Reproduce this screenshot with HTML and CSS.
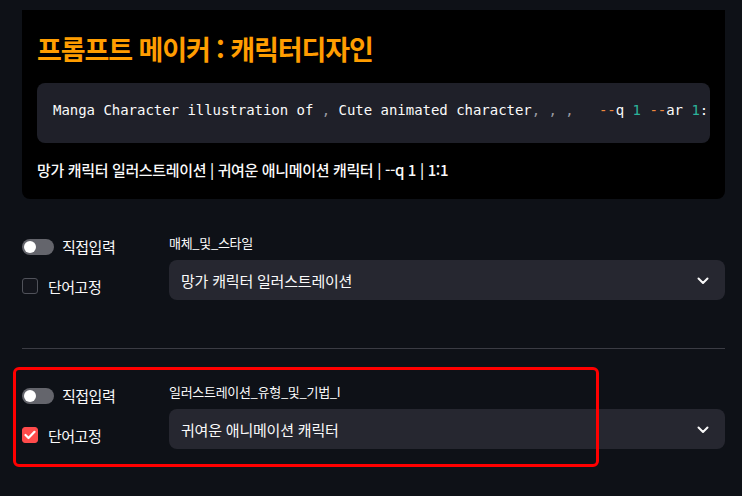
FILE: index.html
```html
<!DOCTYPE html>
<html lang="ko">
<head>
    <meta charset="UTF-8">
    <meta name="viewport" content="width=device-width, initial-scale=1.0">
    <title>프롬프트 메이커</title>
    <link rel="stylesheet" href="styles.css">
</head>
<body>
    <main class="page">
        <section class="hero">
            <h1 class="hero-title">프롬프트 메이커 : 캐릭터디자인</h1>
            <pre class="prompt-code">Manga Character illustration of <span class="punct">,</span> Cute animated character<span class="punct">, , ,</span>   <span class="flag">--</span>q <span class="num">1</span> <span class="flag">--</span>ar <span class="num">1</span>:</pre>
            <p class="hero-summary">망가 캐릭터 일러스트레이션 | 귀여운 애니메이션 캐릭터 | --q 1 | 1:1</p>
        </section>

        <!-- 매체 및 스타일 -->
        <div class="field-row first">
            <div class="field-options">
                <label class="toggle-line">
                    <span class="toggle"><span class="toggle-knob"></span></span>
                    직접입력
                </label>
                <label class="check-line">
                    <span class="checkbox"></span>
                    단어고정
                </label>
            </div>
            <div class="field-main">
                <div class="field-label">매체_및_스타일</div>
                <div class="select">
                    <span>망가 캐릭터 일러스트레이션</span>
                    <svg class="chevron" width="12" height="8" viewBox="0 0 12 8"><path d="M1.5 1.5 L6 6 L10.5 1.5" fill="none" stroke="#fafafa" stroke-width="2" stroke-linecap="round" stroke-linejoin="round"/></svg>
                </div>
            </div>
        </div>

        <hr class="divider">

        <!-- 일러스트레이션 유형 및 기법 -->
        <div class="field-row highlighted">
            <div class="field-options">
                <label class="toggle-line">
                    <span class="toggle"><span class="toggle-knob"></span></span>
                    직접입력
                </label>
                <label class="check-line">
                    <span class="checkbox checked">
                        <svg width="12" height="10" viewBox="0 0 12 10"><path d="M1.5 5 L4.5 8 L10.5 1.8" fill="none" stroke="#fff" stroke-width="2.2" stroke-linecap="round" stroke-linejoin="round"/></svg>
                    </span>
                    단어고정
                </label>
            </div>
            <div class="field-main">
                <div class="field-label">일러스트레이션_유형_및_기법_I</div>
                <div class="select">
                    <span>귀여운 애니메이션 캐릭터</span>
                    <svg class="chevron" width="12" height="8" viewBox="0 0 12 8"><path d="M1.5 1.5 L6 6 L10.5 1.5" fill="none" stroke="#fafafa" stroke-width="2" stroke-linecap="round" stroke-linejoin="round"/></svg>
                </div>
            </div>
            <div class="mark-box"></div>
        </div>
    </main>
</body>
</html>
```

FILE: styles.css
```css
body {
    margin: 0;
    background: #0e1117;
    color: #fafafa;
    font-family: "Noto Sans CJK KR", "Noto Sans", sans-serif;
}
.page {
    padding: 10px 17px 40px 22px;
}
.hero {
    background: #000;
    border-radius: 0 0 8px 8px;
    padding: 22px 15px 18px 15px;
}
.hero-title {
    margin: 0;
    font-size: 27px;
    line-height: 34px;
    font-weight: 700;
    letter-spacing: -1.1px;
    color: #ff9d00;
}
.prompt-code {
    margin: 17px 0 0 0;
    height: 60px;
    box-sizing: border-box;
    padding: 16px 0 0 16px;
    background: #1f2029;
    border-radius: 8px;
    overflow: hidden;
    white-space: pre;
    font-family: "DejaVu Sans Mono", "Liberation Mono", monospace;
    font-size: 14px;
    line-height: 22px;
    letter-spacing: -0.03px;
    color: #fafafa;
}
.prompt-code .punct {
    color: #9a9ba2;
}
.prompt-code .flag {
    color: #f0883e;
}
.prompt-code .num {
    color: #2bb39b;
}
.hero-summary {
    margin: 16px 0 0 0;
    font-size: 15px;
    line-height: 22px;
    font-weight: 500;
    letter-spacing: -0.35px;
}
.field-row {
    display: grid;
    grid-template-columns: 147px 1fr;
    position: relative;
}
.field-row.first {
    margin-top: 34px;
}
.field-options {
    display: flex;
    flex-direction: column;
    gap: 16px;
    padding-top: 1px;
}
.toggle-line,
.check-line {
    display: flex;
    align-items: center;
    height: 24px;
    font-size: 15px;
    letter-spacing: -0.5px;
}
.toggle-line {
    gap: 8px;
}
.check-line {
    gap: 10px;
}
.toggle {
    width: 32px;
    height: 16px;
    border-radius: 8px;
    background: #64656c;
    display: flex;
    align-items: center;
    padding-left: 2px;
    box-sizing: border-box;
    margin-top: 1px;
}
.toggle-knob {
    width: 12px;
    height: 12px;
    border-radius: 50%;
    background: #fff;
}
.checkbox {
    width: 16px;
    height: 16px;
    box-sizing: border-box;
    border: 1px solid #50525a;
    border-radius: 3px;
    background: #13151c;
    display: flex;
    align-items: center;
    justify-content: center;
}
.checkbox.checked {
    background: #ff4b4b;
    border-color: #ff4b4b;
}
.field-label {
    font-size: 13px;
    line-height: 20px;
    letter-spacing: -0.3px;
    margin-bottom: 7px;
}
.select {
    height: 40px;
    background: #262730;
    border-radius: 8px;
    display: flex;
    align-items: center;
    justify-content: space-between;
    padding: 0 16px 0 12px;
    font-size: 15px;
    letter-spacing: -0.2px;
}
.chevron {
    margin-top: 1px;
}
.divider {
    border: none;
    border-top: 1px solid #3b3c44;
    margin: 48px 0 33px 0;
}
.mark-box {
    position: absolute;
    left: -9px;
    top: -15px;
    width: 586px;
    height: 100px;
    box-sizing: border-box;
    border: 3px solid #ff0000;
    border-radius: 6px;
    pointer-events: none;
}
```
